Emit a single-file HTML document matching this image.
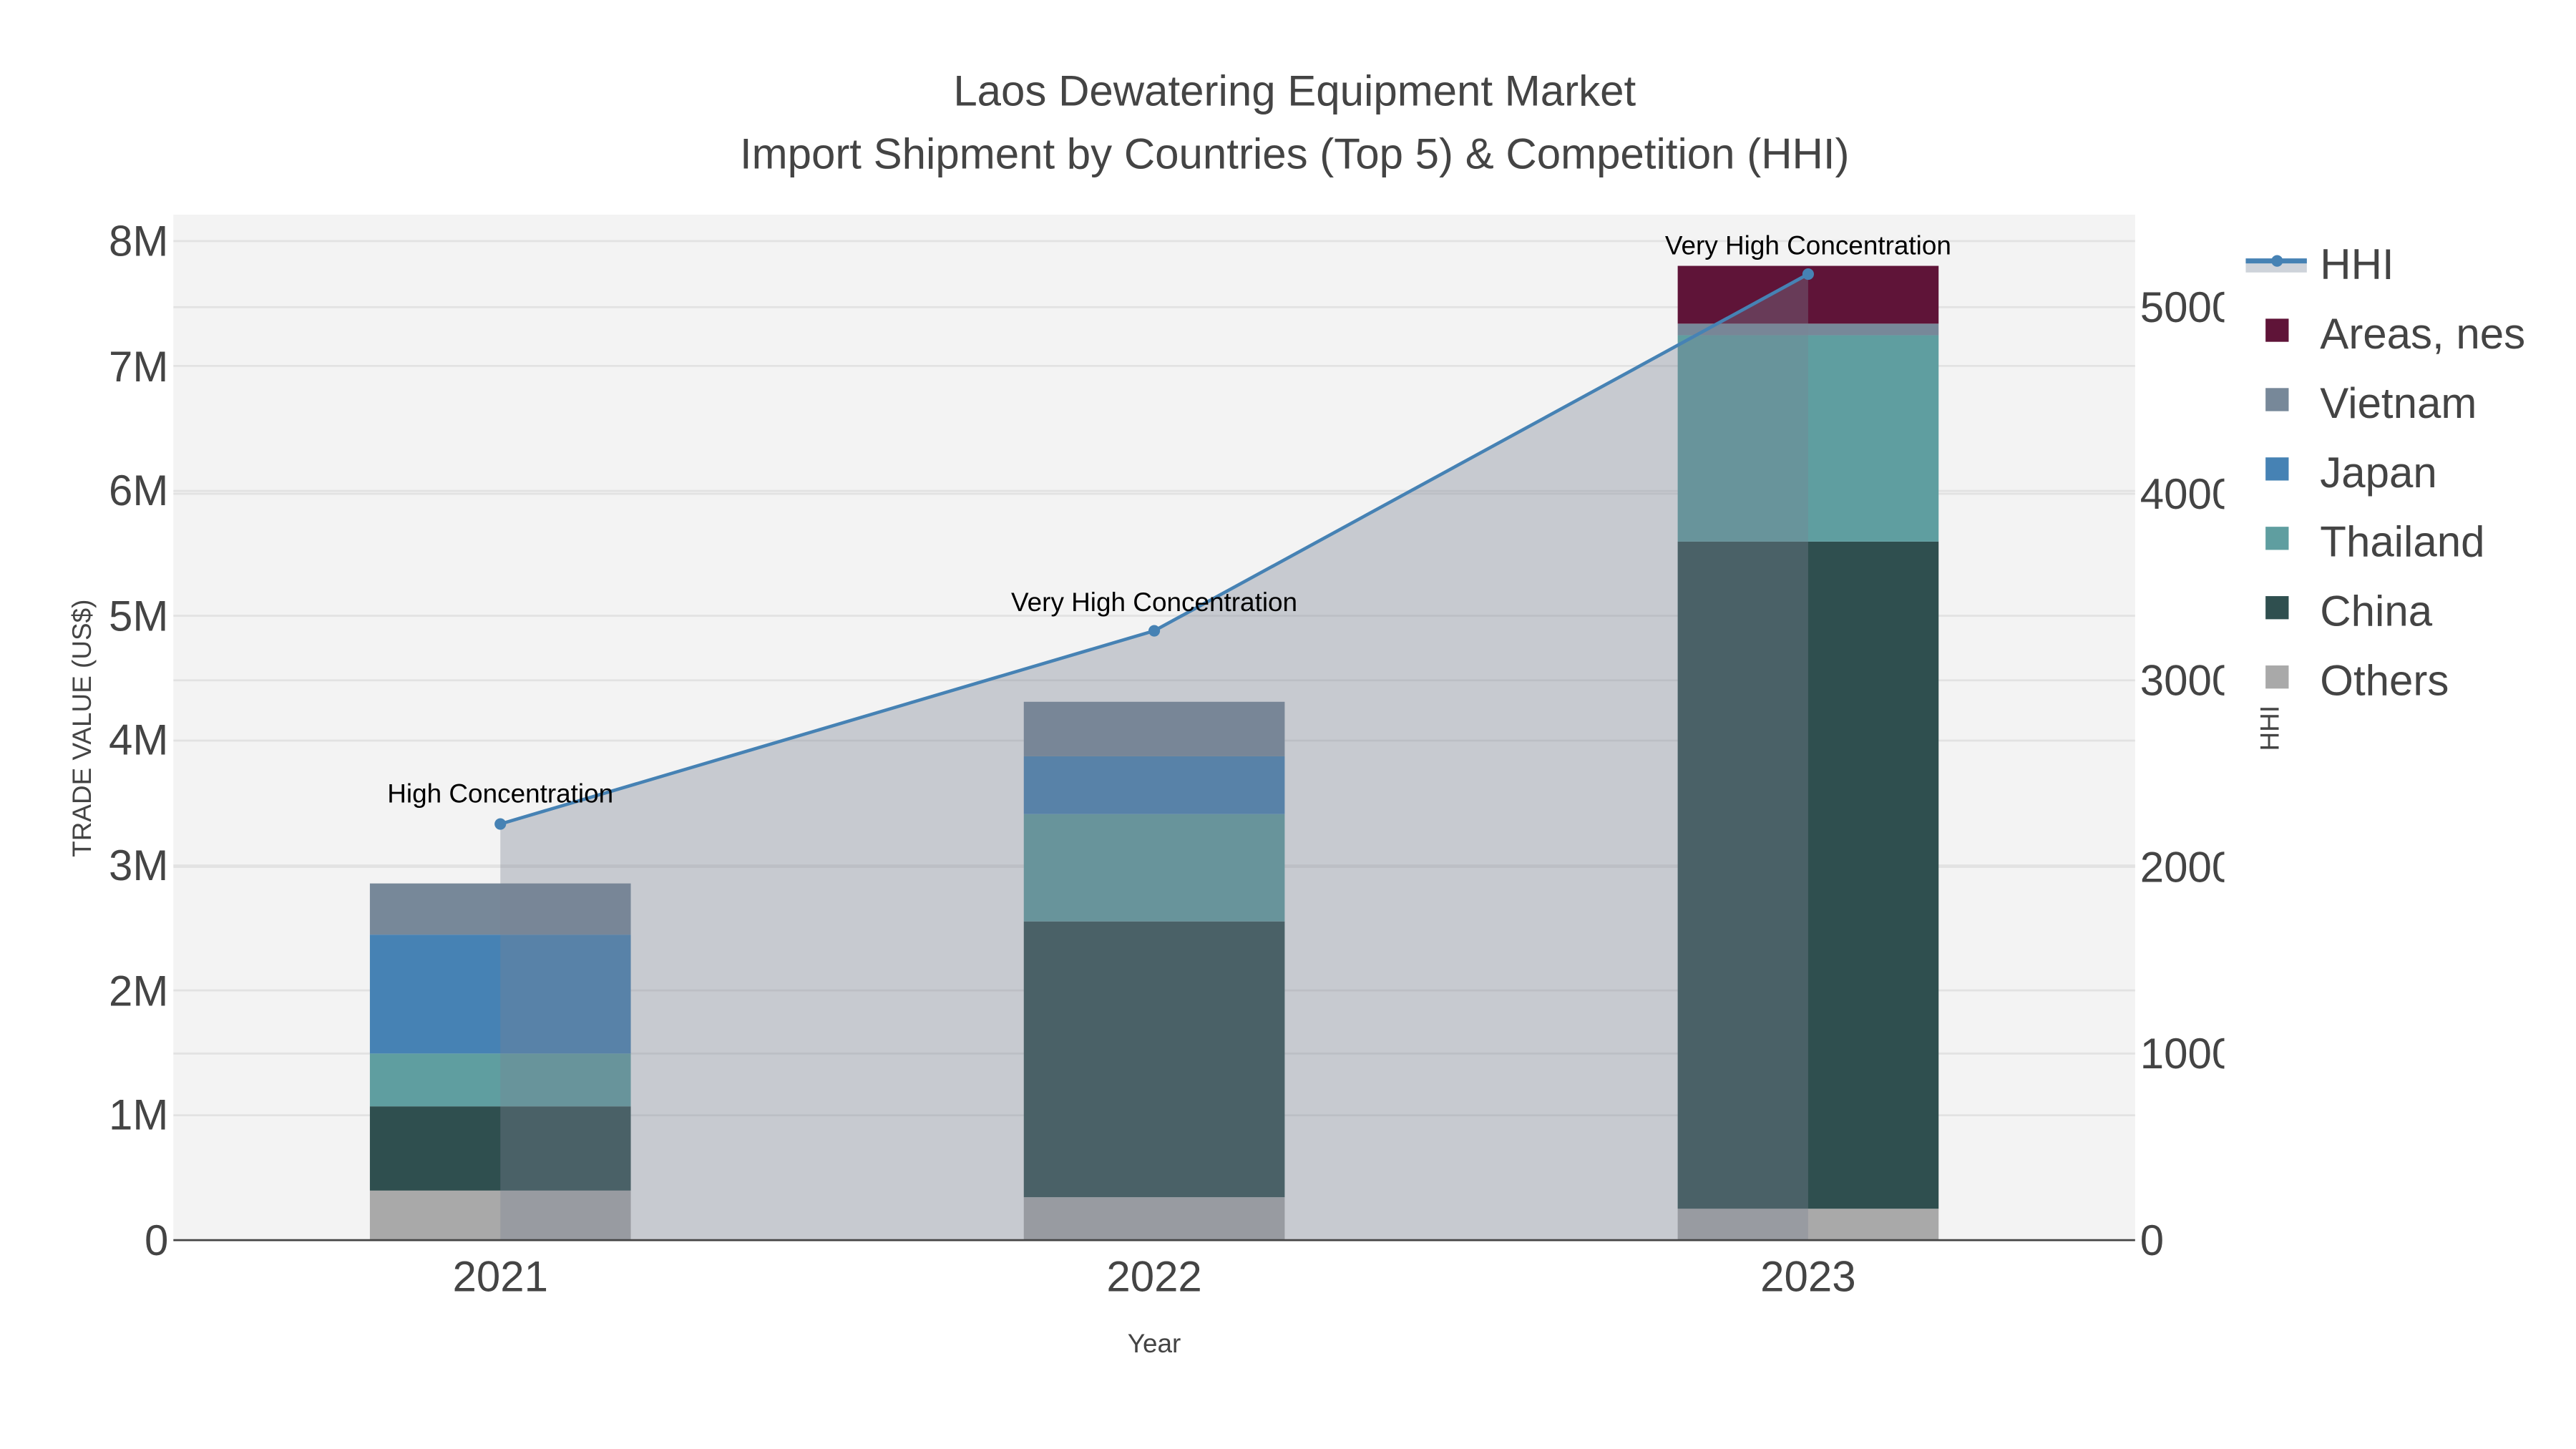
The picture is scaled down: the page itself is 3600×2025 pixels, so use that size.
<!DOCTYPE html>
<html><head><meta charset="utf-8"><style>
html,body{margin:0;padding:0;background:#fff;}
svg{display:block;font-family:"Liberation Sans",Arial,sans-serif;}
</style></head><body>
<svg width="3600" height="2025" viewBox="0 0 1560 877.5" xmlns="http://www.w3.org/2000/svg">
<defs><clipPath id="rc"><rect x="1290" y="0" width="57" height="877"/></clipPath></defs>
<rect x="0" y="0" width="1560" height="877.5" fill="#fff"/>
<rect x="105" y="130" width="1188" height="621" fill="#f3f3f3"/>
<g stroke="#e2e2e2" stroke-width="1.2">
<line x1="105" x2="1293" y1="675.4" y2="675.4"/><line x1="105" x2="1293" y1="599.8" y2="599.8"/>
<line x1="105" x2="1293" y1="524.1" y2="524.1"/><line x1="105" x2="1293" y1="448.5" y2="448.5"/>
<line x1="105" x2="1293" y1="372.9" y2="372.9"/><line x1="105" x2="1293" y1="297.3" y2="297.3"/>
<line x1="105" x2="1293" y1="221.6" y2="221.6"/><line x1="105" x2="1293" y1="146" y2="146"/>
<line x1="105" x2="1293" y1="638" y2="638"/><line x1="105" x2="1293" y1="525" y2="525"/>
<line x1="105" x2="1293" y1="412" y2="412"/><line x1="105" x2="1293" y1="299" y2="299"/>
<line x1="105" x2="1293" y1="186" y2="186"/>
</g>
<rect x="224" y="721" width="158" height="30" fill="#a9a9a9"/>
<rect x="224" y="670" width="158" height="51" fill="#2f4f4f"/>
<rect x="224" y="638" width="158" height="32" fill="#5f9ea0"/>
<rect x="224" y="566" width="158" height="72" fill="#4682b4"/>
<rect x="224" y="535" width="158" height="31" fill="#778899"/>
<rect x="620" y="725" width="158" height="26" fill="#a9a9a9"/>
<rect x="620" y="558" width="158" height="167" fill="#2f4f4f"/>
<rect x="620" y="493" width="158" height="65" fill="#5f9ea0"/>
<rect x="620" y="458" width="158" height="35" fill="#4682b4"/>
<rect x="620" y="425" width="158" height="33" fill="#778899"/>
<rect x="1016" y="732" width="158" height="19" fill="#a9a9a9"/>
<rect x="1016" y="328" width="158" height="404" fill="#2f4f4f"/>
<rect x="1016" y="203" width="158" height="125" fill="#5f9ea0"/>
<rect x="1016" y="196" width="158" height="7" fill="#778899"/>
<rect x="1016" y="161" width="158" height="35" fill="#5f1438"/>
<polygon points="303,751 303,499 699,382 1095,166 1095,751" fill="rgba(123,131,146,0.36)"/>
<polyline points="303,499 699,382 1095,166" fill="none" stroke="#4682b4" stroke-width="2"/>
<circle cx="303" cy="499" r="3.5" fill="#4682b4"/><circle cx="699" cy="382" r="3.5" fill="#4682b4"/><circle cx="1095" cy="166" r="3.5" fill="#4682b4"/>
<line x1="105" x2="1293" y1="751" y2="751" stroke="#444" stroke-width="1.2"/>
<g font-size="16" fill="#000" text-anchor="middle">
<text x="303" y="486">High Concentration</text>
<text x="699" y="370">Very High Concentration</text>
<text x="1095" y="154">Very High Concentration</text>
</g>
<g fill="#444" text-anchor="middle" font-size="26">
<text x="784" y="64">Laos Dewatering Equipment Market</text>
<text x="784" y="102">Import Shipment by Countries (Top 5) &amp; Competition (HHI)</text>
</g>
<g fill="#444" font-size="26" text-anchor="end">
<text x="102" y="760">0</text><text x="102" y="684">1M</text><text x="102" y="609">2M</text>
<text x="102" y="533">3M</text><text x="102" y="457">4M</text><text x="102" y="382">5M</text>
<text x="102" y="306">6M</text><text x="102" y="231">7M</text><text x="102" y="155">8M</text>
</g>
<g fill="#444" font-size="26" clip-path="url(#rc)">
<text x="1296" y="760">0</text><text x="1296" y="647">1000</text><text x="1296" y="534">2000</text>
<text x="1296" y="421">3000</text><text x="1296" y="308">4000</text><text x="1296" y="195">5000</text>
</g>
<g fill="#444" font-size="26" text-anchor="middle">
<text x="303" y="782">2021</text><text x="699" y="782">2022</text><text x="1095" y="782">2023</text>
</g>
<text x="699" y="819" font-size="16" fill="#444" text-anchor="middle">Year</text>
<text transform="translate(55,441) rotate(-90)" font-size="16" fill="#444" text-anchor="middle">TRADE VALUE (US$)</text>
<text transform="translate(1380,441) rotate(-90)" font-size="16" fill="#444" text-anchor="middle">HHI</text>
<rect x="1360" y="157" width="37" height="8" fill="#ced3da"/>
<line x1="1360" x2="1397" y1="158" y2="158" stroke="#4682b4" stroke-width="3"/>
<circle cx="1379" cy="158" r="3.5" fill="#4682b4"/>
<g font-size="26" fill="#444">
<text x="1405" y="169">HHI</text>
<rect x="1372" y="193" width="14" height="14" fill="#5f1438"/><text x="1405" y="211">Areas, nes</text>
<rect x="1372" y="235" width="14" height="14" fill="#778899"/><text x="1405" y="253">Vietnam</text>
<rect x="1372" y="277" width="14" height="14" fill="#4682b4"/><text x="1405" y="295">Japan</text>
<rect x="1372" y="319" width="14" height="14" fill="#5f9ea0"/><text x="1405" y="337">Thailand</text>
<rect x="1372" y="361" width="14" height="14" fill="#2f4f4f"/><text x="1405" y="379">China</text>
<rect x="1372" y="403" width="14" height="14" fill="#a9a9a9"/><text x="1405" y="421">Others</text>
</g>
</svg>
</body></html>
